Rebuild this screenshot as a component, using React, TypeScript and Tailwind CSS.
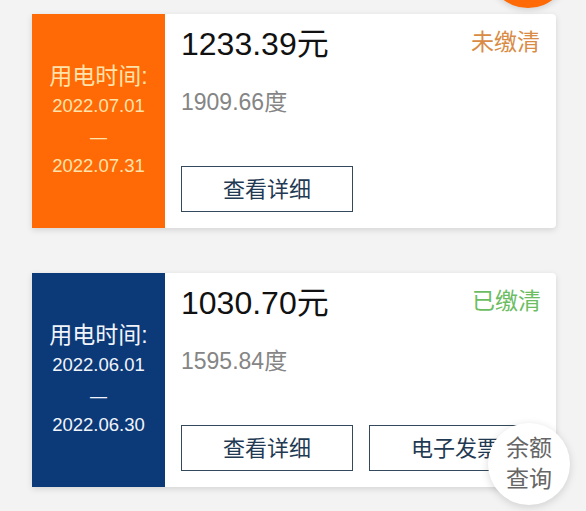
import React from "react";

type Bill = {
  amount: string;
  degree: string;
  status: string;
  statusColor: string;
  panel: string;
  panelText: string;
  from: string;
  to: string;
  invoice: boolean;
};

const bills: Bill[] = [
  {
    amount: "1233.39",
    degree: "1909.66",
    status: "未缴清",
    statusColor: "text-[#d98b45]",
    panel: "bg-[#ff6a06]",
    panelText: "text-[#ffe3ab]",
    from: "2022.07.01",
    to: "2022.07.31",
    invoice: false,
  },
  {
    amount: "1030.70",
    degree: "1595.84",
    status: "已缴清",
    statusColor: "text-[#6cbd62]",
    panel: "bg-[#0c3a78]",
    panelText: "text-[#f1f4fa]",
    from: "2022.06.01",
    to: "2022.06.30",
    invoice: true,
  },
];

const FONT = { fontFamily: '"Liberation Sans", "Noto Sans CJK SC", sans-serif' };

function Card({ b }: { b: Bill }) {
  return (
    <div className="flex h-[214px] w-[524px] rounded-r-[4px] bg-white shadow-[0_2px_6px_rgba(0,0,0,0.13)]">
      <div className={`flex w-[133px] shrink-0 flex-col items-center justify-center ${b.panel} ${b.panelText}`}>
        <div className="flex h-[30px] items-center text-[23px] leading-none">用电时间:</div>
        <div className="flex h-[30px] items-center text-[18.5px] leading-none">{b.from}</div>
        <div className="flex h-[30px] items-center pt-[2px] text-[17px] leading-none">—</div>
        <div className="flex h-[30px] items-center text-[18.5px] leading-none">{b.to}</div>
      </div>
      <div className="flex flex-1 flex-col pl-[16px] pr-[16px] pt-[14px]">
        <div className="flex items-start justify-between">
          <div className="text-[32px] leading-none text-[#111]">
            {b.amount}
            <span>元</span>
          </div>
          <div className={`mt-[3px] text-[23px] leading-none ${b.statusColor}`}>{b.status}</div>
        </div>
        <div className="mt-[31px] text-[23px] leading-none text-[#858585]">{b.degree}度</div>
        <div className="mt-[52px] flex gap-[16px]">
          <div className="flex h-[46px] w-[172px] items-center justify-center border-[1.5px] border-[#34495b] text-[22px] text-[#1f3a52]">
            查看详细
          </div>
          {b.invoice && (
            <div className="flex h-[46px] w-[172px] items-center justify-center border-[1.5px] border-[#34495b] text-[22px] text-[#1f3a52]">
              电子发票
            </div>
          )}
        </div>
      </div>
    </div>
  );
}

export default function App() {
  return (
    <div className="relative h-[511px] w-[586px] overflow-hidden bg-[#f3f3f3]" style={FONT}>
      <div className="flex flex-col gap-[45px] pl-[32px] pt-[14px]">
        {bills.map((b) => (
          <Card key={b.amount} b={b} />
        ))}
      </div>
      <div className="absolute left-[487px] top-[-74px] h-[82px] w-[82px] rounded-full bg-[#ff6a06] shadow-[0_2px_6px_rgba(0,0,0,0.15)]" />
      <div className="absolute left-[488px] top-[423px] flex h-[82px] w-[82px] flex-col items-center justify-center rounded-full bg-white text-[23px] leading-[31px] text-[#666] shadow-[0_2px_8px_rgba(0,0,0,0.15)]">
        <div>余额</div>
        <div>查询</div>
      </div>
    </div>
  );
}
